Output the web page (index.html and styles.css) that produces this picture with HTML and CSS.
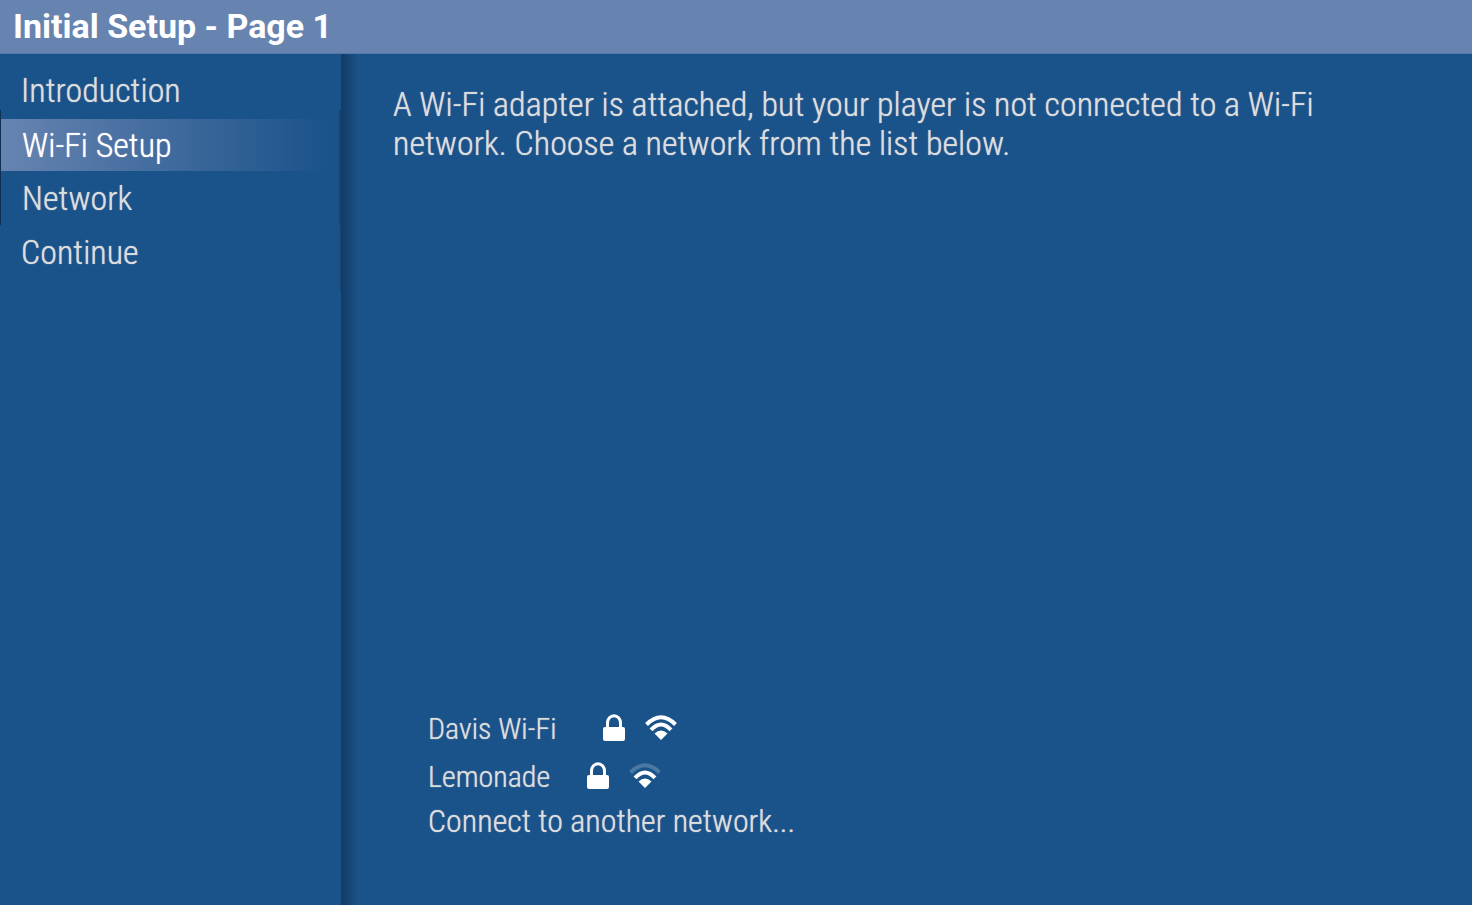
FILE: index.html
```html
<!DOCTYPE html>
<html lang="en">
<head>
    <meta charset="UTF-8">
    <meta name="viewport" content="width=device-width, initial-scale=1.0">
    <title>Initial Setup - Page 1</title>
    <link rel="stylesheet" href="styles.css">
</head>
<body>
    <header class="title-bar">
        <h1>Initial Setup - Page 1</h1>
    </header>
    <div class="content">
        <nav class="sidebar">
            <div class="menu-group first">
                <a href="#introduction">Introduction</a>
            </div>
            <div class="menu-group current">
                <a href="#wifi" class="active" aria-current="page">Wi-Fi Setup</a>
                <a href="#network">Network</a>
            </div>
            <div class="menu-group last">
                <a href="#continue">Continue</a>
            </div>
        </nav>
        <main class="panel">
            <p class="message">A Wi-Fi adapter is attached, but your player is not connected to a Wi-Fi network. Choose a network from the list below.</p>

            <!-- Available networks -->
            <div class="networks">
                <button type="button" class="network">
                    <span>Davis Wi-Fi</span>
                    <svg class="lock" viewBox="0 0 22 27">
                        <path d="M4.5 14V9a6.5 7.3 0 0 1 13 0v5" fill="none" stroke="#fff" stroke-width="3"/>
                        <rect x="0" y="13" width="22" height="14" rx="2" fill="#fff"/>
                    </svg>
                    <svg class="wifi" viewBox="0 0 32 25">
                        <path d="M1.5 9.5Q16-5 30.5 9.5" fill="none" stroke="#fff" stroke-width="4"/>
                        <path d="M6 14.8Q16 4 26 14.8" fill="none" stroke="#fff" stroke-width="4"/>
                        <path d="M9.5 18.500Q16 12.5 22.5 18.500L16 25z" fill="#fff"/>
                    </svg>
                </button>
                <button type="button" class="network weak">
                    <span>Lemonade</span>
                    <svg class="lock" viewBox="0 0 22 27">
                        <path d="M4.5 14V9a6.5 7.3 0 0 1 13 0v5" fill="none" stroke="#fff" stroke-width="3"/>
                        <rect x="0" y="13" width="22" height="14" rx="2" fill="#fff"/>
                    </svg>
                    <svg class="wifi" viewBox="0 0 32 25">
                        <path d="M1.5 9.5Q16-5 30.5 9.5" fill="none" stroke="#4b77a3" stroke-width="4"/>
                        <path d="M6 14.8Q16 4 26 14.8" fill="none" stroke="#fff" stroke-width="4"/>
                        <path d="M9.5 18.500Q16 12.5 22.5 18.500L16 25z" fill="#fff"/>
                    </svg>
                </button>
                <button type="button" class="network other">Connect to another network...</button>
            </div>
        </main>
    </div>
</body>
</html>
```

FILE: styles.css
```css
body {
    margin: 0;
    min-height: 100vh;
    display: flex;
    flex-direction: column;
    background-color: #1a528a;
    color: #dcdddd;
    font-family: "Roboto Condensed", Roboto, sans-serif;
    font-weight: 300;
}
.title-bar {
    background-color: #6784b1;
    border-bottom: 1px solid #5379ab;
    padding: 6px 13px 7px;
}
h1 {
    margin: 0;
    font-family: Roboto, sans-serif;
    font-size: 34px;
    line-height: 40px;
    color: #ffffff;
}
.content {
    flex: 1;
    display: flex;
    /* thickens the light weight a little */
    text-shadow: 0 0 1px currentColor;
}
.sidebar {
    width: 341px;
    flex-shrink: 0;
}
.menu-group a {
    display: block;
    padding: 0 21px;
    font-size: 34px;
    line-height: 54px;
    color: #dcdddd;
    text-decoration: none;
}
.first {
    padding-top: 16px;
}
.menu-group.first a {
    line-height: 40px;
}
.current {
    padding-top: 9px;
    border-left: 1px solid #0f3053;
    border-right: 2px solid #164470;
}
.menu-group .active {
    line-height: 52px;
    background-image: linear-gradient(to right, #6784b1, #1a528a 97%);
    color: #ffffff;
}
.last {
    padding-bottom: 12px;
    border-right: 1px solid #164470;
}
.panel {
    flex: 1;
    display: flex;
    flex-direction: column;
    justify-content: space-between;
    padding: 31px 120px 64px 52px;
    background-image: linear-gradient(to right, #133b63, #1a528a 17px);
}
.message {
    margin: 0;
    font-size: 34px;
    line-height: 39px;
}
.networks {
    display: flex;
    flex-direction: column;
    align-items: flex-start;
    padding-left: 35px;
}
.network {
    display: flex;
    align-items: center;
    padding: 0;
    border: 0;
    background: none;
    color: #dcdddd;
    font-family: inherit;
    font-size: 30px;
    font-weight: 300;
    line-height: 48px;
    text-shadow: inherit;
    cursor: pointer;
}
.other {
    font-size: 32px;
    line-height: 40px;
}
.lock {
    width: 22px;
    height: 27px;
    margin: 0 0 4px 46px;
}
.weak .lock {
    margin-left: 37px;
}
.wifi {
    width: 32px;
    height: 25px;
    margin: 0 0 4px 20px;
}
```
